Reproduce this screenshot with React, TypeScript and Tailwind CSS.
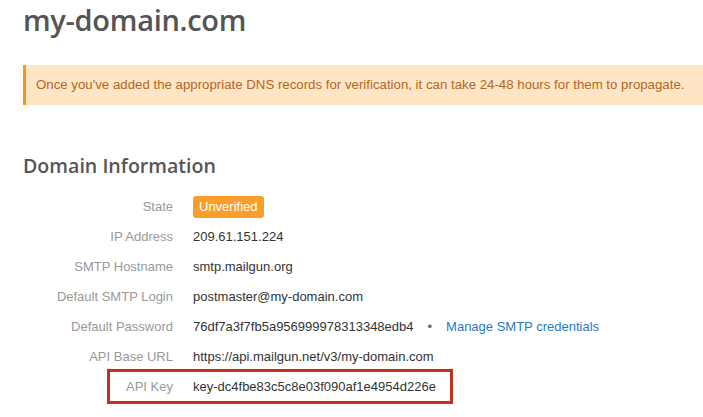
type Row = {
  label: string;
  value: React.ReactNode;
  highlight?: boolean;
};

function Badge({ children }: { children: React.ReactNode }) {
  return (
    <span className="inline-flex h-[22px] items-center rounded-[3px] bg-[#f99e2b] px-[6px] text-[13px] text-white">
      {children}
    </span>
  );
}

export default function App() {
  const rows: Row[] = [
    { label: "State", value: <Badge>Unverified</Badge> },
    { label: "IP Address", value: "209.61.151.224" },
    { label: "SMTP Hostname", value: "smtp.mailgun.org" },
    { label: "Default SMTP Login", value: "postmaster@my-domain.com" },
    {
      label: "Default Password",
      value: (
        <span className="flex items-center">
          76df7a3f7fb5a956999978313348edb4
          <span className="mx-[14px] text-[#666]">•</span>
          <a href="#" className="text-[#2a7ac6]">
            Manage SMTP credentials
          </a>
        </span>
      ),
    },
    { label: "API Base URL", value: "https://api.mailgun.net/v3/my-domain.com" },
    { label: "API Key", value: "key-dc4fbe83c5c8e03f090af1e4954d226e", highlight: true },
  ];

  return (
    <div className="h-[417px] w-[703px] overflow-hidden bg-white pl-[23px] font-['Liberation_Sans',Arial,sans-serif]">
      <h1 className="pt-[1px] font-['Open_Sans',sans-serif] text-[29px] font-semibold leading-[38px] tracking-[-0.3px] text-[#555]">
        my-domain.com
      </h1>

      <div className="mt-[26px] flex h-[40px] w-[700px] items-center border-l-[3px] border-[#f7961f] bg-[#fde5c5] pl-[10px] text-[13.25px] text-[#b5651d]">
        Once you've added the appropriate DNS records for verification, it can take 24-48 hours for them to propagate.
      </div>

      <h2 className="mt-[47px] font-['Open_Sans',sans-serif] text-[19.6px] font-semibold leading-[28px] text-[#555]">
        Domain Information
      </h2>

      <div className="mt-[12px] flex flex-col">
        {rows.map((row) => (
          <div key={row.label} className="relative flex h-[30px] items-center text-[13px]">
            <div className="w-[150px] text-right text-[#999]">{row.label}</div>
            <div className="ml-[20px] text-[#333]">{row.value}</div>
            {row.highlight && (
              <div className="absolute left-[84px] top-[-3px] h-[35px] w-[346px] border-[3px] border-[#c2311c]" />
            )}
          </div>
        ))}
      </div>
    </div>
  );
}
